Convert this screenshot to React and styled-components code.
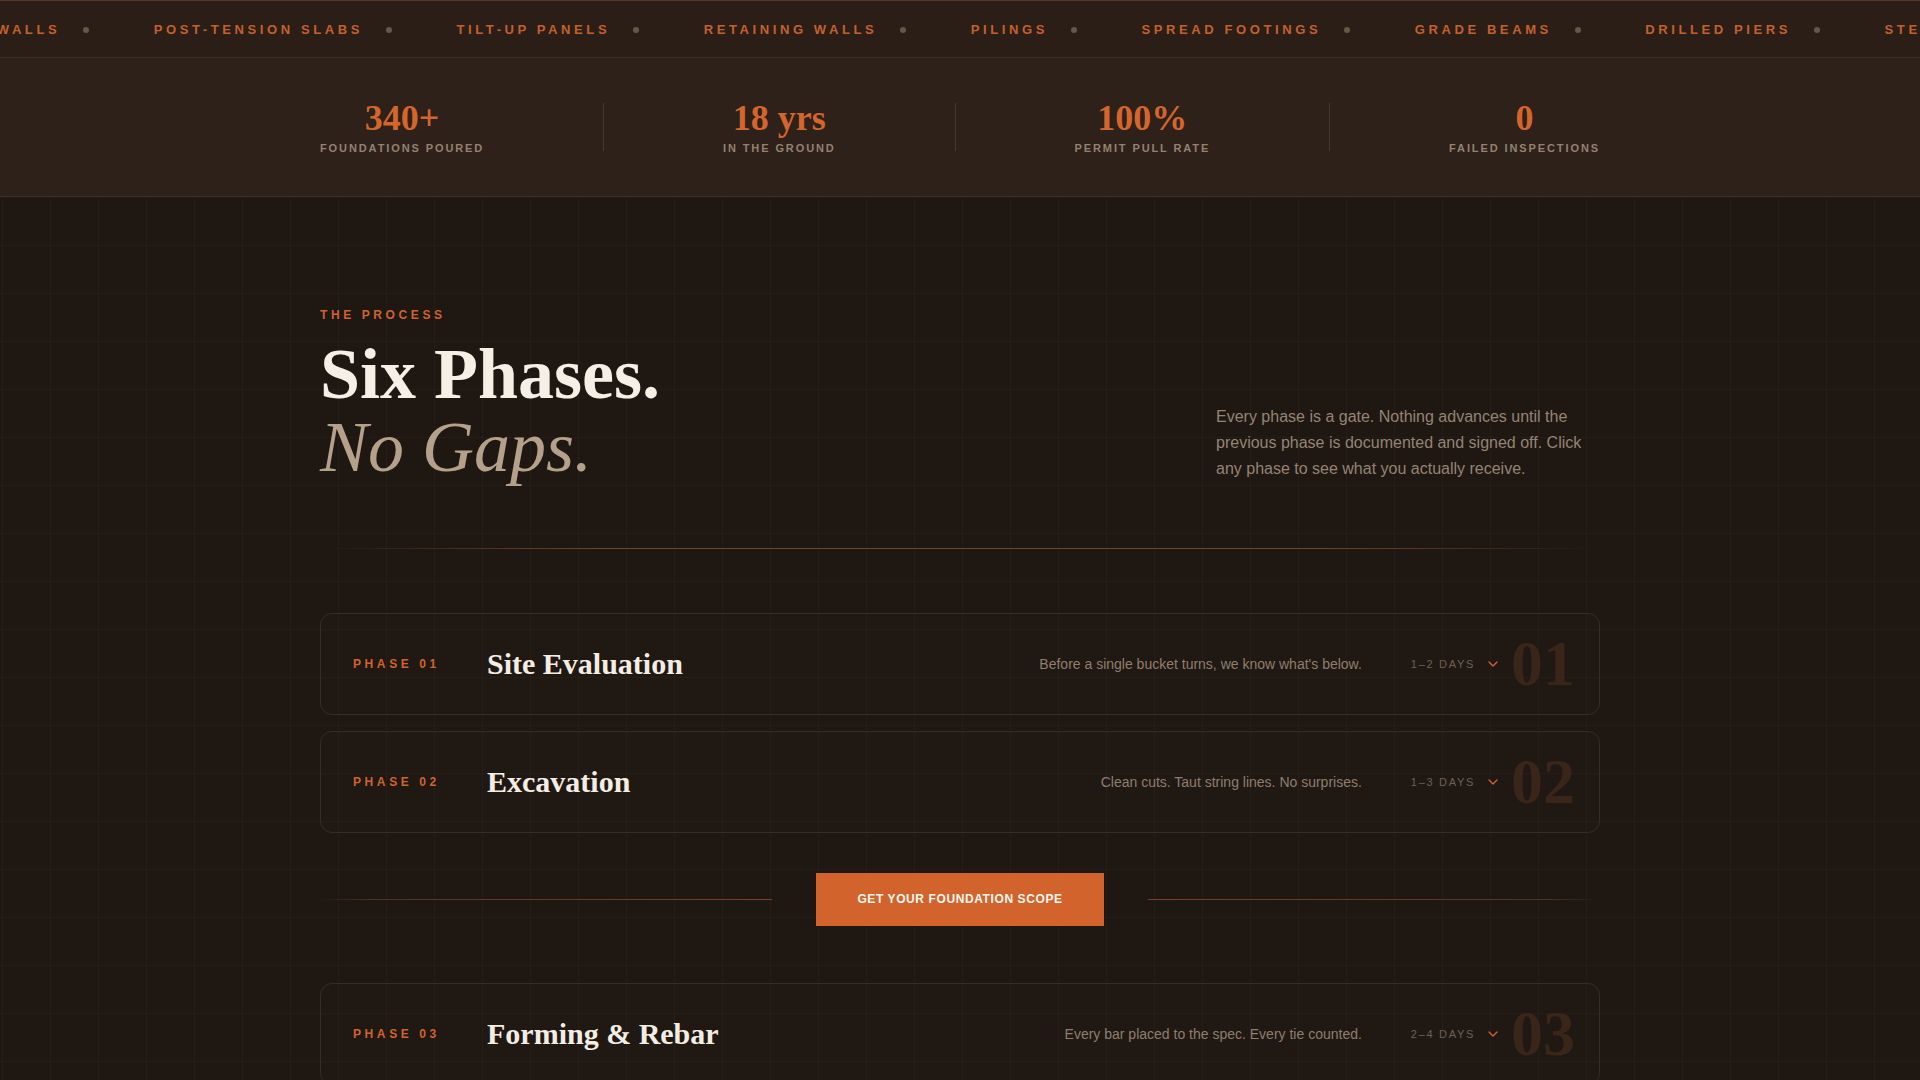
import React from "react";
import styled, { createGlobalStyle } from "styled-components";
import { ChevronDown } from "lucide-react";

const SERIF = `"Liberation Serif", "Times New Roman", serif`;
const SANS = `"Liberation Sans", Arial, sans-serif`;
const ORANGE = "#d2632d";

const Global = createGlobalStyle`
  html, body { margin: 0; padding: 0; background: #1f1712; }
  body { font-family: ${SANS}; color: #f3ece2; }
  * { box-sizing: border-box; }
`;

const Ticker = styled.div`
  background: #2a1e16;
  border-top: 1px solid #5a3721;
  border-bottom: 1px solid #3e302a;
  overflow: hidden;
  white-space: nowrap;
  padding: 21px 0 20px;
`;

const Track = styled.div`
  display: flex;
  transform: translateX(-61px);
`;

const TickItem = styled.div`
  display: flex;
  align-items: center;
  gap: 23px;
  margin-right: 64.5px;
  flex: none;
`;

const TickText = styled.span`
  font-family: ${SANS};
  font-weight: 700;
  font-size: 13px;
  line-height: 15px;
  letter-spacing: 3.6px;
  color: #c5602e;
  text-transform: uppercase;
`;

const Dot = styled.span`
  width: 6px;
  height: 6px;
  border-radius: 50%;
  background: #66574b;
  flex: none;
`;

const StatsBand = styled.div`
  background: #2d2119;
  border-bottom: 1px solid #3e312b;
  padding: 42px 0;
`;

const Container = styled.div`
  width: 1280px;
  margin: 0 auto;
`;

const StatsRow = styled(Container)`
  display: flex;
  justify-content: space-between;
  align-items: center;
`;

const Stat = styled.div`
  display: flex;
  flex-direction: column;
  align-items: center;
`;

const StatNum = styled.div`
  font-family: ${SERIF};
  font-weight: 700;
  font-size: 36px;
  line-height: 1;
  color: #d4652d;
`;

const StatLabel = styled.div`
  margin-top: 6px;
  font-family: ${SANS};
  font-weight: 700;
  font-size: 11px;
  letter-spacing: 1.9px;
  color: #948270;
  text-transform: uppercase;
`;

const StatDivider = styled.div`
  width: 1px;
  height: 48px;
  background: #47392f;
`;

const Section = styled.section`
  background-color: #1f1712;
  background-image:
    linear-gradient(to right, rgba(255, 235, 210, 0.028) 1px, transparent 1px),
    linear-gradient(to bottom, rgba(255, 235, 210, 0.028) 1px, transparent 1px);
  background-size: 48px 48px;
  background-position: 2px 0;
  padding: 111px 0 120px;
  min-height: 900px;
`;

const Header = styled.div`
  display: flex;
  justify-content: space-between;
  align-items: flex-end;
`;

const Eyebrow = styled.div`
  font-family: ${SANS};
  font-weight: 700;
  font-size: 12px;
  letter-spacing: 3.6px;
  color: #d2632d;
  text-transform: uppercase;
  margin-bottom: 16px;
`;

const Title = styled.h2`
  margin: 0;
  font-family: ${SERIF};
  font-weight: 700;
  font-size: 72px;
  line-height: 1.02;
  color: #f5efe6;
`;

const TitleItalic = styled.span`
  display: block;
  font-weight: 400;
  font-style: italic;
  color: #b5a089;
`;

const Intro = styled.p`
  margin: 0 0 2px;
  width: 384px;
  font-family: ${SANS};
  font-size: 16px;
  line-height: 26.4px;
  color: #958473;
`;

const Rule = styled.div`
  height: 1px;
  margin: 63px 0 64px;
  background: linear-gradient(
    90deg,
    rgba(122, 74, 42, 0) 0%,
    rgba(122, 74, 42, 0.9) 22%,
    rgba(122, 74, 42, 0.9) 78%,
    rgba(122, 74, 42, 0) 100%
  );
`;

const List = styled.div`
  display: flex;
  flex-direction: column;
  gap: 16px;
`;

const Card = styled.div`
  display: flex;
  align-items: center;
  height: 102px;
  padding: 0 24px 0 32px;
  border: 1px solid #372c25;
  border-radius: 12px;
  background: rgba(255, 240, 225, 0.008);
  cursor: pointer;
`;

const PhaseLabel = styled.div`
  flex: 0 0 110px;
  margin-right: 24px;
  font-family: ${SANS};
  font-weight: 700;
  font-size: 12px;
  letter-spacing: 3.6px;
  color: #d2632d;
`;

const PhaseTitle = styled.h3`
  flex: 1;
  margin: 0;
  font-family: ${SERIF};
  font-weight: 700;
  font-size: 30px;
  line-height: 1.2;
  color: #f4ede3;
`;

const PhaseDesc = styled.div`
  font-family: ${SANS};
  font-size: 14px;
  color: #8f7e6d;
  margin-right: 49px;
`;

const Days = styled.div`
  font-family: ${SANS};
  font-size: 11px;
  letter-spacing: 1.7px;
  color: #6e6055;
  margin-right: 10px;
`;

const Chevron = styled(ChevronDown)`
  color: ${ORANGE};
  flex: none;
  margin-right: 8px;
`;

const BigNum = styled.div`
  font-family: ${SERIF};
  font-weight: 700;
  font-size: 64px;
  line-height: 1;
  color: #3a2519;
  width: 66px;
  text-align: right;
`;

const CtaRow = styled.div`
  display: flex;
  align-items: center;
  gap: 44px;
  margin: 24px 0 41px;
`;

const CtaLine = styled.div`
  flex: 1;
  height: 1px;
  background: linear-gradient(
    ${(p) => (p.$side === "left" ? "90deg" : "270deg")},
    rgba(122, 74, 42, 0) 0%,
    rgba(122, 74, 42, 0.55) 12%,
    rgba(122, 74, 42, 0.9) 100%
  );
`;

const CtaButton = styled.button`
  border: none;
  background: ${ORANGE};
  color: #fff8f0;
  font-family: ${SANS};
  font-weight: 700;
  font-size: 12px;
  letter-spacing: 0.6px;
  text-transform: uppercase;
  padding: 19px 41px;
  line-height: 15px;
  cursor: pointer;
`;

const tickerItems = [
  "Stem Walls",
  "Post-Tension Slabs",
  "Tilt-Up Panels",
  "Retaining Walls",
  "Pilings",
  "Spread Footings",
  "Grade Beams",
  "Drilled Piers",
  "Stem Walls",
  "Post-Tension Slabs",
];

const stats = [
  { num: "340+", label: "Foundations Poured" },
  { num: "18 yrs", label: "In the Ground" },
  { num: "100%", label: "Permit Pull Rate" },
  { num: "0", label: "Failed Inspections" },
];

const phases = [
  { n: "01", title: "Site Evaluation", desc: "Before a single bucket turns, we know what's below.", days: "1–2 DAYS" },
  { n: "02", title: "Excavation", desc: "Clean cuts. Taut string lines. No surprises.", days: "1–3 DAYS" },
  { n: "03", title: "Forming & Rebar", desc: "Every bar placed to the spec. Every tie counted.", days: "2–4 DAYS" },
  { n: "04", title: "Inspection", desc: "Nothing gets poured until the inspector signs.", days: "1 DAY" },
  { n: "05", title: "The Pour", desc: "One continuous placement. Vibrated, screeded, finished.", days: "1 DAY" },
  { n: "06", title: "Cure & Handoff", desc: "Documented strength, stamped records, clean site.", days: "7–28 DAYS" },
];

function PhaseCard({ p }) {
  return (
    <Card>
      <PhaseLabel>PHASE {p.n}</PhaseLabel>
      <PhaseTitle>{p.title}</PhaseTitle>
      <PhaseDesc>{p.desc}</PhaseDesc>
      <Days>{p.days}</Days>
      <Chevron size={16} strokeWidth={2} />
      <BigNum>{p.n}</BigNum>
    </Card>
  );
}

export default function App() {
  return (
    <>
      <Global />
      <Ticker>
        <Track>
          {tickerItems.map((t, i) => (
            <TickItem key={i}>
              <TickText>{t}</TickText>
              <Dot />
            </TickItem>
          ))}
        </Track>
      </Ticker>
      <StatsBand>
        <StatsRow>
          {stats.map((s, i) => (
            <React.Fragment key={s.label}>
              {i > 0 && <StatDivider />}
              <Stat>
                <StatNum>{s.num}</StatNum>
                <StatLabel>{s.label}</StatLabel>
              </Stat>
            </React.Fragment>
          ))}
        </StatsRow>
      </StatsBand>
      <Section>
        <Container>
          <Header>
            <div>
              <Eyebrow>The Process</Eyebrow>
              <Title>
                Six Phases.
                <TitleItalic>No Gaps.</TitleItalic>
              </Title>
            </div>
            <Intro>
              Every phase is a gate. Nothing advances until the previous phase is
              documented and signed off. Click any phase to see what you actually
              receive.
            </Intro>
          </Header>
          <Rule />
          <List>
            <PhaseCard p={phases[0]} />
            <PhaseCard p={phases[1]} />
            <CtaRow>
              <CtaLine $side="left" />
              <CtaButton>Get Your Foundation Scope</CtaButton>
              <CtaLine $side="right" />
            </CtaRow>
            {phases.slice(2).map((p) => (
              <PhaseCard key={p.n} p={p} />
            ))}
          </List>
        </Container>
      </Section>
    </>
  );
}
